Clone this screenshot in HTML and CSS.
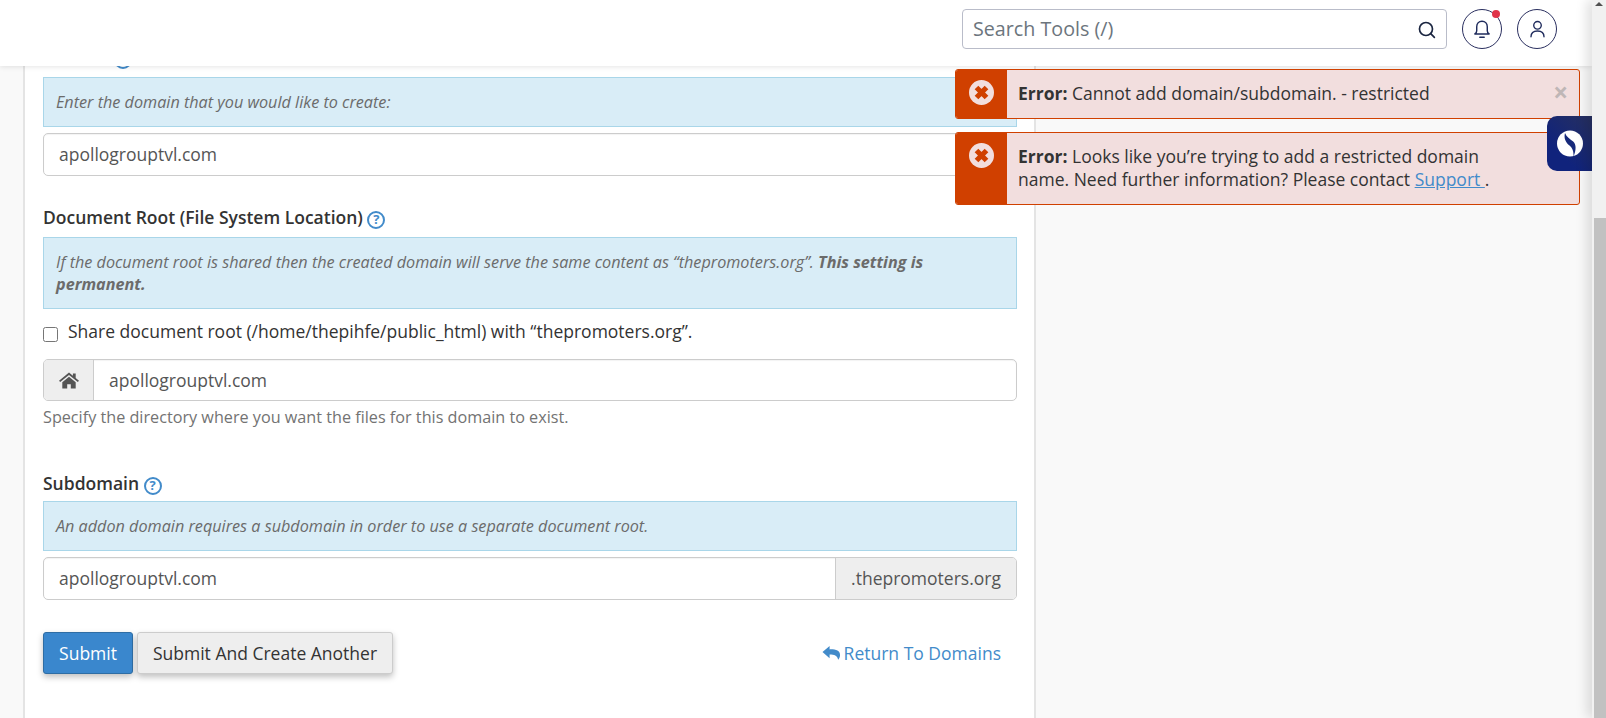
FILE: index.html
```html
<!DOCTYPE html>
<html lang="en">
<head>
<meta charset="utf-8">
<title>Create a New Domain</title>
<link rel="stylesheet" href="styles.css">
</head>
<body>
<div class="page">
  <header class="topbar">
    <div class="search">
      <span class="search-text">Search Tools (/)</span>
      <svg class="search-icon" viewBox="0 0 20 20" width="21" height="21"><circle cx="9.500" cy="9.500" r="6.200"/><path d="M14 14l3.500 3.500"/></svg>
    </div>
    <button class="round-btn">
      <svg viewBox="0 0 20 20" width="22" height="22"><path d="M3.500 14.500c1.300-.8 1.700-1.600 1.700-3V8c0-3 2-5 4.800-5s4.800 2 4.800 5v3.500c0 1.400.4 2.200 1.700 3z"/><path d="M8 17.500h4"/></svg>
      <span class="dot"></span>
    </button>
    <button class="round-btn">
      <svg viewBox="0 0 20 20" width="21" height="21"><circle cx="10" cy="6" r="3.600"/><path d="M3.800 17c0-3.800 2.600-5.600 6.200-5.600s6.200 1.800 6.200 5.600"/></svg>
    </button>
  </header>

  <main class="content">
    <section class="card">
      <form class="form">
        <div class="label clipped">Domain <span class="help">?</span></div>
        <p class="info">Enter the domain that you would like to create:</p>
        <div class="field">apollogrouptvl.com</div>

        <div class="label docroot">Document Root (File System Location) <span class="help">?</span></div>
        <p class="info">If the document root is shared then the created domain will serve the same content as “thepromoters.org”. <b>This setting is permanent.</b></p>
        <label class="check"><span class="box"></span>Share document root (/home/thepihfe/public_html) with “thepromoters.org”.</label>
        <div class="group">
          <span class="addon addon-left">
            <svg viewBox="0 0 20 17" width="20" height="17"><path fill="#555" d="M10 .5 0 8.700l1.200 1.400L10 2.900l8.800 7.200L20 8.700l-3.300-2.700V1.500h-2.800v2.200zM3.300 10.200v6.300h4.900v-4.300h3.600v4.300h4.900v-6.300L10 4.700z"/></svg>
          </span>
          <span class="group-value">apollogrouptvl.com</span>
        </div>
        <p class="hint">Specify the directory where you want the files for this domain to exist.</p>

        <div class="label subdomain">Subdomain <span class="help">?</span></div>
        <p class="info">An addon domain requires a subdomain in order to use a separate document root.</p>
        <div class="group group-sub">
          <span class="group-value">apollogrouptvl.com</span>
          <span class="addon addon-right">.thepromoters.org</span>
        </div>

        <div class="actions">
          <button type="button" class="btn btn-primary">Submit</button>
          <button type="button" class="btn btn-default">Submit And Create Another</button>
          <a class="back" href="#">
            <svg viewBox="0 0 20 16" width="19" height="16"><path fill="#428bca" d="M8 .5.500 7 8 13.500V9.500c5 0 8 1 9 5.500 1.300-1.500 2-3.300 2-5C19 5.500 14.500 4 8 4.200z"/></svg>
            Return To Domains
          </a>
        </div>
      </form>
    </section>

    <div class="toasts">
      <div class="toast toast-one">
        <span class="toast-icon">
          <svg viewBox="0 0 25 25" width="25" height="25"><circle cx="12.500" cy="12.500" r="12.500" fill="#f2dede"/><path fill="none" stroke="#d04000" stroke-width="5.200" d="M7.500 7.500l10 10M17.500 7.500l-10 10"/></svg>
        </span>
        <div class="toast-body"><b>Error:</b> Cannot add domain/subdomain. - restricted</div>
        <span class="close">×</span>
      </div>
      <div class="toast toast-two">
        <span class="toast-icon">
          <svg viewBox="0 0 25 25" width="25" height="25"><circle cx="12.500" cy="12.500" r="12.500" fill="#f2dede"/><path fill="none" stroke="#d04000" stroke-width="5.200" d="M7.500 7.500l10 10M17.500 7.500l-10 10"/></svg>
        </span>
        <div class="toast-body narrow"><b>Error:</b> Looks like you’re trying to add a restricted domain name. Need further information? Please contact <a href="#">Support </a>.</div>
      </div>
    </div>

    <div class="badge">
      <svg viewBox="0 0 26 26" width="26" height="27"><circle cx="13" cy="13" r="13" fill="#fff"/><path fill="#16297a" d="M8 2.500C9.500 6.500 13 8.500 16.200 11c3.300 2.800 3 9 .3 15 .2-5.500-1-8.500-4-11C9 12.300 6.500 8 8 2.500z"/></svg>
    </div>
  </main>
</div>
<aside class="scrollbar">
  <span class="arrow"></span>
  <span class="track"></span>
  <span class="thumb"></span>
</aside>
</body>
</html>
```
FILE: styles.css
```css
* { box-sizing: border-box; }
html, body { margin: 0; height: 100%; }
body {
  display: flex;
  height: 718px;
  overflow: hidden;
  font-family: "Open Sans", "Noto Sans", sans-serif;
  font-size: 17.5px;
  line-height: 23px;
  color: #333;
  background: #f9f9f9;
}
.page { flex: 1; min-width: 0; display: flex; flex-direction: column; position: relative; }

.topbar {
  height: 66px;
  flex: none;
  background: #fff;
  box-shadow: 0 1px 5px rgba(0, 0, 0, .1);
  display: flex;
  align-items: flex-start;
  justify-content: flex-end;
  gap: 15px;
  padding: 9px 35px 0 0;
  position: relative;
  z-index: 2;
}
.search {
  width: 485px;
  height: 40px;
  border: 1px solid #b9bcc9;
  border-radius: 4px;
  display: flex;
  align-items: center;
  justify-content: space-between;
  padding: 0 9px 0 10px;
  font-size: 19.7px;
  color: #6c757d;
}
.search-text { margin-top: -2px; }
.search-icon { fill: none; stroke: #1a2540; stroke-width: 1.600; stroke-linecap: round; }
.round-btn {
  width: 40px;
  height: 40px;
  padding: 0;
  border: 1px solid #2a2f5f;
  border-radius: 50%;
  background: #fff;
  display: flex;
  align-items: center;
  justify-content: center;
  position: relative;
}
.round-btn svg { fill: none; stroke: #1f2b5c; stroke-width: 1.300; stroke-linecap: round; stroke-linejoin: round; }
.dot {
  position: absolute;
  top: 0;
  right: 1px;
  width: 8px;
  height: 8px;
  border-radius: 50%;
  background: #e0344a;
}

.content { flex: 1; min-height: 0; position: relative; overflow: hidden; }
.card {
  width: 1013px;
  height: 100%;
  margin-left: 23px;
  background: #fff;
  border-left: 2px solid #e4e4e4;
  border-right: 2px solid #e4e4e4;
  padding: 0 17px 0 18px;
}
.form { display: flex; flex-direction: column; }
.label { font-weight: 600; height: 23px; white-space: nowrap; }
.clipped { margin-top: -20px; }
.docroot { margin-top: 30px; }
.subdomain { margin-top: 44px; }
.help {
  display: inline-flex;
  align-items: center;
  justify-content: center;
  width: 18px;
  height: 18px;
  border: 2px solid #428bca;
  border-radius: 50%;
  color: #428bca;
  font-size: 13px;
  font-weight: 700;
  line-height: 1;
  vertical-align: 0;
}
.info {
  margin: 0;
  padding: 13px 12px;
  background: #d9edf7;
  border: 1px solid #a9d6e9;
  font-size: 16.2px;
  font-style: italic;
  line-height: 22px;
  color: #6b6b6b;
}
.label + .info { margin-top: 8px; }
.subdomain + .info { margin-top: 6px; }
.field, .group {
  height: 43px;
  margin-top: 6px;
  border: 1px solid #ccc;
  border-radius: 5px;
  background: #fff;
  color: #555;
  box-shadow: inset 0 1px 1px rgba(0, 0, 0, .05);
}
.field { padding: 9px 15px; }
.group { display: flex; align-items: stretch; overflow: hidden; }
.group-value { flex: 1; padding: 9px 15px; }
.addon {
  background: #eee;
  flex: none;
  display: flex;
  align-items: center;
  justify-content: center;
  color: #555;
}
.addon-left { width: 50px; border-right: 1px solid #ccc; }
.addon-right { width: 181px; border-left: 1px solid #ccc; }
.check {
  display: flex;
  align-items: center;
  gap: 10px;
  margin-top: 10px;
  height: 24px;
  color: #333;
}
.box {
  width: 15px;
  height: 15px;
  margin-top: 7px;
  border: 1px solid #767676;
  border-radius: 2.500px;
  background: #fff;
  flex: none;
}
.check + .group { margin-top: 16px; height: 42px; }
.hint { margin: 5px 0 0; font-size: 16.2px; line-height: 22px; color: #737373; }
.actions { display: flex; align-items: center; gap: 4px; margin-top: 32px; }
.btn {
  height: 42px;
  padding: 0;
  border-radius: 3px;
  font: inherit;
  box-shadow: 0 3px 6px rgba(0, 0, 0, .25);
}
.btn-primary { width: 90px; background: #3a87cd; border: 1px solid #2e6da4; color: #fff; }
.btn-default { width: 256px; background: #eee; border: 1px solid #ccc; color: #333; }
.back {
  margin-left: auto;
  margin-right: 16px;
  display: flex;
  align-items: center;
  gap: 3px;
  color: #428bca;
  text-decoration: none;
}

.toasts {
  position: absolute;
  top: 3px;
  left: 955px;
  width: 625px;
  display: flex;
  flex-direction: column;
  gap: 13px;
  z-index: 3;
}
.toast {
  display: flex;
  border: 1px solid #d04000;
  border-radius: 3px;
  background: #f2dede;
  position: relative;
  overflow: hidden;
}
.toast-one { height: 50px; }
.toast-two { height: 73px; }
.toast-icon {
  width: 51px;
  flex: none;
  background: #d04000;
  display: flex;
  justify-content: center;
  padding-top: 10px;
}
.toast-body { padding: 12px 12px 11px 11px; line-height: 23px; color: #333; }
.toast-two .toast-body { padding-top: 12px; }
.narrow { max-width: 500px; }
.toast-body a { color: #428bca; text-decoration: underline; }
.close {
  position: absolute;
  top: 10px;
  right: 11px;
  font-size: 26px;
  font-weight: 700;
  line-height: 25px;
  color: #bfb6b6;
}
.badge {
  position: absolute;
  top: 50px;
  right: 0;
  width: 45px;
  height: 55px;
  background: linear-gradient(225deg, #27305f 0%, #10237c 70%);
  border-radius: 10px 0 0 10px;
  display: flex;
  align-items: center;
  justify-content: center;
  z-index: 4;
}

.scrollbar {
  width: 14px;
  flex: none;
  height: 718px;
  background: #f1f1f1;
  display: flex;
  flex-direction: column;
  position: relative;
  z-index: 5;
  box-shadow: -5px 0 12px rgba(0, 0, 0, .13);
}
.arrow {
  width: 0;
  height: 0;
  margin: 2px auto 0;
  border-left: 4px solid transparent;
  border-right: 4px solid transparent;
  border-bottom: 4px solid #505050;
  flex: none;
}
.track { height: 212px; flex: none; }
.thumb { flex: 1; background: #c1c1c1; margin: 0 0 0 2px; }
```
